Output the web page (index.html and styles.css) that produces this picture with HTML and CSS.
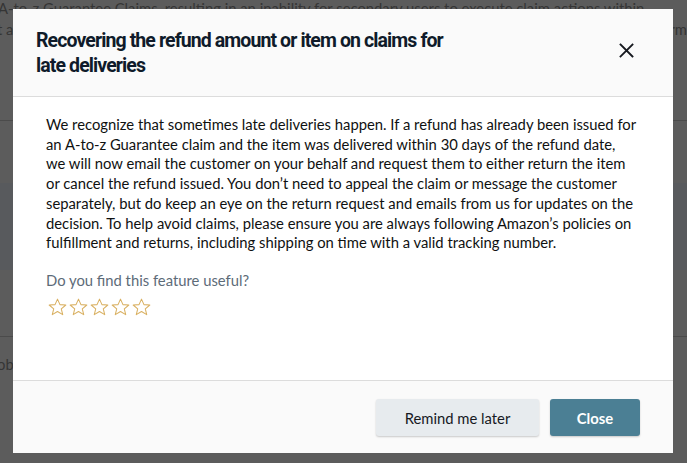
FILE: index.html
```html
<!DOCTYPE html>
<html lang="en">
<head>
<meta charset="utf-8">
<title>Recovering the refund amount</title>
<link rel="stylesheet" href="styles.css">
</head>
<body>
<div class="page">
  <p class="page-line first">A-to-z Guarantee Claims, resulting in an inability for secondary users to execute claim actions within</p>
  <p class="page-line second"><span>t a</span><span>rm</span></p>
  <div class="page-rule r1"></div>
  <div class="page-band"></div>
  <div class="page-rule r2"></div>
  <p class="page-line third">ob</p>
</div>

<div class="modal" role="dialog" aria-labelledby="modal-title">
  <header class="modal-header">
    <h2 id="modal-title" class="modal-title">Recovering the refund amount or item on claims for late deliveries</h2>
    <button class="modal-x" aria-label="Close">
      <svg width="15" height="15" viewBox="0 0 15 15"><path d="M1.5 1.5 L13.5 13.5 M13.5 1.5 L1.5 13.5" stroke="#16191f" stroke-width="1.8" fill="none" stroke-linecap="square"/></svg>
    </button>
  </header>
  <section class="modal-body">
    <p class="modal-text">We recognize that sometimes late deliveries happen. If a refund has already been issued for an A-to-z Guarantee claim and the item was delivered within 30 days of the refund date, we will now email the customer on your behalf and request them to either return the item or cancel the refund issued. You don’t need to appeal the claim or message the customer separately, but do keep an eye on the return request and emails from us for updates on the decision. To help avoid claims, please ensure you are always following Amazon’s policies on fulfillment and returns, including shipping on time with a valid tracking number.</p>
    <p class="modal-question">Do you find this feature useful?</p>
    <div class="stars">
      <svg class="star" viewBox="0 0 20 19"><path d="M10 1.2 L12.6 7 L18.8 7.4 L14 11.4 L15.5 17.6 L10 14.3 L4.5 17.6 L6 11.4 L1.2 7.4 L7.4 7 Z" fill="none" stroke="#d9b061" stroke-width="1.1" stroke-linejoin="round"/></svg>
      <svg class="star" viewBox="0 0 20 19"><path d="M10 1.2 L12.6 7 L18.8 7.4 L14 11.4 L15.5 17.6 L10 14.3 L4.5 17.6 L6 11.4 L1.2 7.4 L7.4 7 Z" fill="none" stroke="#d9b061" stroke-width="1.1" stroke-linejoin="round"/></svg>
      <svg class="star" viewBox="0 0 20 19"><path d="M10 1.2 L12.6 7 L18.8 7.4 L14 11.4 L15.5 17.6 L10 14.3 L4.5 17.6 L6 11.4 L1.2 7.4 L7.4 7 Z" fill="none" stroke="#d9b061" stroke-width="1.1" stroke-linejoin="round"/></svg>
      <svg class="star" viewBox="0 0 20 19"><path d="M10 1.2 L12.6 7 L18.8 7.4 L14 11.4 L15.5 17.6 L10 14.3 L4.5 17.6 L6 11.4 L1.2 7.4 L7.4 7 Z" fill="none" stroke="#d9b061" stroke-width="1.1" stroke-linejoin="round"/></svg>
      <svg class="star" viewBox="0 0 20 19"><path d="M10 1.2 L12.6 7 L18.8 7.4 L14 11.4 L15.5 17.6 L10 14.3 L4.5 17.6 L6 11.4 L1.2 7.4 L7.4 7 Z" fill="none" stroke="#d9b061" stroke-width="1.1" stroke-linejoin="round"/></svg>
    </div>
  </section>
  <footer class="modal-footer">
    <button class="btn btn-secondary">Remind me later</button>
    <button class="btn btn-primary">Close</button>
  </footer>
</div>
</body>
</html>
```

FILE: styles.css
```css
* { box-sizing: border-box; }
html, body { margin: 0; padding: 0; }
body {
  width: 687px;
  height: 463px;
  overflow: hidden;
  background: #5c5c5c;
  font-family: Lato, "Noto Sans", Arial, sans-serif;
  position: relative;
}

.page { position: relative; width: 687px; height: 463px; }
.page-line {
  margin: 0;
  color: #353535;
  font-size: 14.8px;
  line-height: 18px;
  white-space: nowrap;
}
.page-line.first { margin-left: -2px; margin-top: -1px; }
.page-line.second { display: flex; justify-content: space-between; margin-top: 3px; margin-left: -3px; width: 690px; }
.page-rule { height: 1px; background: #4b4b4b; }
.page-rule.r1 { margin-top: 82px; }
.page-band { height: 87px; margin-top: 62px; background: #585a5d; }
.page-rule.r2 { margin-top: 66px; }
.page-line.third { margin-top: 18px; margin-left: -3px; }

.modal {
  position: absolute;
  left: 13px;
  top: 9px;
  width: 660px;
  height: 444px;
  background: #fff;
  display: flex;
  flex-direction: column;
}

.modal-header {
  background: #fafafa;
  border-bottom: 1px solid #dcdcdc;
  height: 88px;
  padding: 19px 39px 0 23px;
  display: flex;
  justify-content: space-between;
  align-items: flex-start;
  gap: 20px;
}
.modal-title {
  margin: 0;
  max-width: 420px;
  font-family: Roboto, "Noto Sans", sans-serif;
  font-weight: 700;
  font-size: 19.5px;
  letter-spacing: -0.9px;
  line-height: 25px;
  color: #0f1b2a;
}
.modal-x {
  border: 0;
  background: transparent;
  padding: 0;
  margin-top: 15px;
  width: 15px;
  height: 15px;
  display: flex;
  cursor: pointer;
}

.modal-body {
  flex: 1;
  padding: 18px 35px 0 33px;
}
.modal-text {
  margin: 0;
  font-size: 14.8px;
  line-height: 19.7px;
  color: #0f1111;
}
.modal-question {
  margin: 18px 0 0;
  font-size: 14.8px;
  line-height: 19px;
  color: #5d6b78;
}
.stars {
  display: flex;
  gap: 2px;
  margin-top: 8px;
  margin-left: 2px;
}
.star { width: 19px; height: 18px; display: block; }

.modal-footer {
  background: #fafafa;
  border-top: 1px solid #dcdcdc;
  height: 73px;
  padding: 18px 33px 0 0;
  display: flex;
  justify-content: flex-end;
  align-items: flex-start;
  gap: 11px;
}
.btn {
  height: 37px;
  border: 0;
  border-radius: 3px;
  font-family: Lato, "Noto Sans", Arial, sans-serif;
  font-size: 14.8px;
  box-shadow: 0 1px 2px rgba(0,0,0,0.2);
  cursor: pointer;
}
.btn-secondary {
  width: 163px;
  background: #e7ebee;
  color: #16191f;
}
.btn-primary {
  width: 90px;
  background: #4b7f94;
  color: #fff;
  font-weight: 700;
}
```
